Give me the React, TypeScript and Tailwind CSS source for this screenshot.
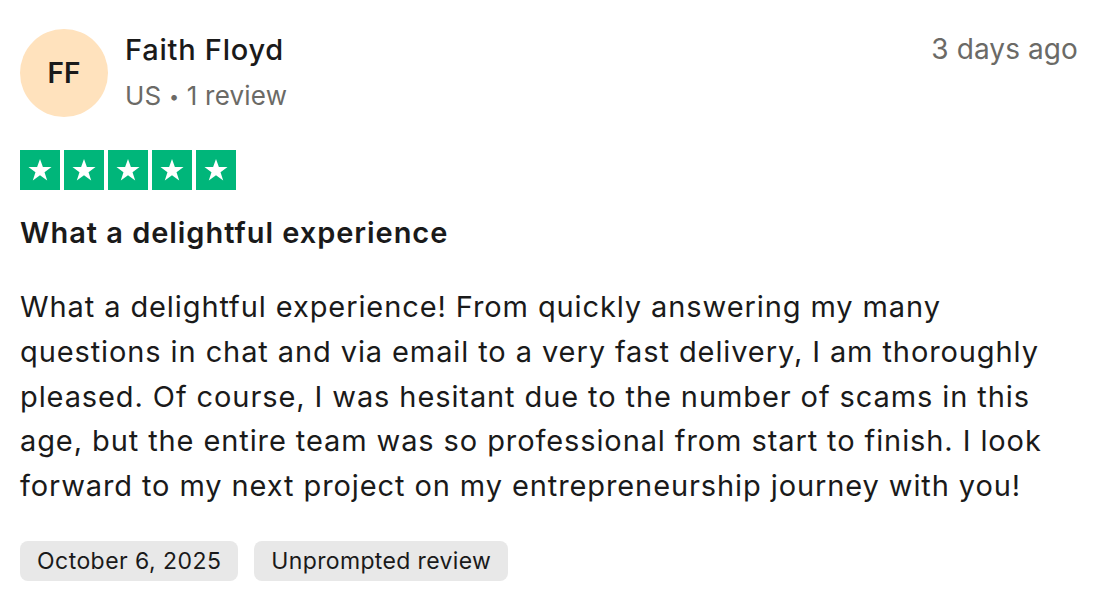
import React from "react";

function Star() {
  return (
    <div className="w-10 h-10 bg-[#00b67a] flex items-center justify-center">
      <svg width="28" height="28" viewBox="0 0 24 24">
        <path
          d="M12 2.5l2.47 7.03h7.43l-6.02 4.37 2.3 7.1L12 16.6l-6.18 4.4 2.3-7.1L2.1 9.53h7.43z"
          fill="#ffffff"
        />
      </svg>
    </div>
  );
}

export default function App() {
  const lines = [
    "What a delightful experience! From quickly answering my many",
    "questions in chat and via email to a very fast delivery, I am thoroughly",
    "pleased. Of course, I was hesitant due to the number of scams in this",
    "age, but the entire team was so professional from start to finish. I look",
    "forward to my next project on my entrepreneurship journey with you!",
  ];
  return (
    <div
      className="w-[1108px] h-[600px] bg-white text-[#1a1a1a] pl-5 pr-[30px] pt-[29px]"
      style={{ fontFamily: "Inter, 'Noto Sans', sans-serif" }}
    >
      <div className="flex items-start">
        <div className="w-[88px] h-[88px] rounded-full bg-[#ffe2bd] flex items-center justify-center text-[28px] font-semibold text-[#1a1a1a] shrink-0">
          FF
        </div>
        <div className="ml-[17px] flex flex-col">
          <div className="text-[29px] font-medium leading-[40px] tracking-[0.75px] mt-[1px]">Faith Floyd</div>
          <div className="text-[26px] leading-[40px] text-[#6b6a66] tracking-[0.2px] mt-[6px]">
            US <span className="text-[18px] relative -top-[2px]">•</span> 1 review
          </div>
        </div>
        <div className="ml-auto text-[28px] leading-[40px] tracking-[0.1px] text-[#6b6a66]">3 days ago</div>
      </div>
      <div className="flex gap-[4px] mt-[31px]">
        <Star />
        <Star />
        <Star />
        <Star />
        <Star />
      </div>
      <div className="text-[29px] font-semibold mt-[25px] leading-[36px] tracking-[0.95px]">What a delightful experience</div>
      <div className="mt-[34px] text-[29px] leading-[44.75px] tracking-[0.9px]">
        {lines.map((l, i) => (
          <div key={i} className="whitespace-nowrap">{l}</div>
        ))}
      </div>
      <div className="flex gap-4 mt-[32px]">
        <div className="h-10 px-[17px] rounded-lg bg-[#e8e8e8] flex items-center text-[23px] tracking-[0.45px] text-[#1a1a1a]">October 6, 2025</div>
        <div className="h-10 px-[17px] rounded-lg bg-[#e8e8e8] flex items-center text-[23px] tracking-[0.35px] text-[#1a1a1a]">Unprompted review</div>
      </div>
    </div>
  );
}
